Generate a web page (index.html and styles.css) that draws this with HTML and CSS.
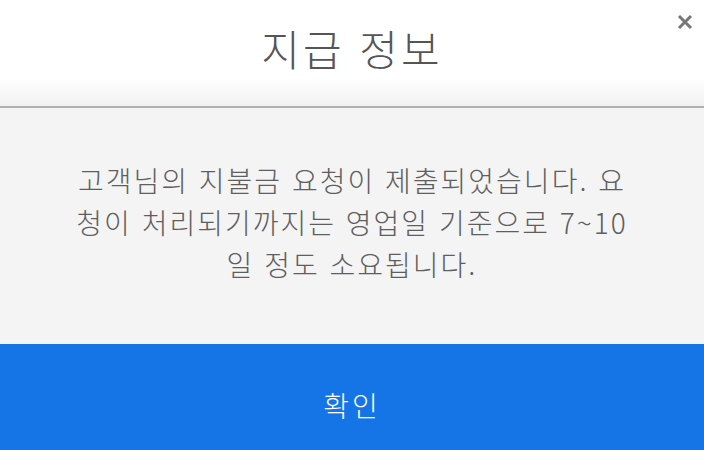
FILE: index.html
```html
<!DOCTYPE html>
<html lang="ko">

<head>
    <meta charset="UTF-8">
    <meta name="viewport" content="width=device-width, initial-scale=1.0">
    <title>지급 정보</title>
    <link rel="stylesheet" href="styles.css">
</head>

<body>
    <div id="dialog">
        <div class="head">
            <h1 class="title">지급 정보</h1>
            <a href="javascript:;" class="close">
                <svg width="16" height="16" viewBox="0 0 16 16">
                    <path d="M2 2 L14 14 M14 2 L2 14" stroke="#777" stroke-width="3" />
                </svg>
            </a>
        </div>
        <div class="body">
            <p class="msg">고객님의 지불금 요청이 제출되었습니다. 요청이 처리되기까지는 영업일 기준으로 7~10일 정도 소요됩니다.</p>
        </div>
        <button class="ok">확인</button>
    </div>
</body>

</html>
```

FILE: styles.css
```css
html,
body {
    margin: 0;
    padding: 0;
    overflow: hidden;
}

#dialog {
    width: 704px;
    height: 450px;
    display: flex;
    flex-direction: column;
    font-family: "Noto Sans CJK KR", "Noto Sans", sans-serif;
    font-weight: 300;
}

.head {
    position: relative;
    height: 106px;
    background: linear-gradient(to bottom, #fff 0, #fff 78px, #f1f1f1 106px);
    border-bottom: 2px solid #b0b0b0;
    display: flex;
    justify-content: center;
}

.title {
    margin: 0;
    padding-top: 20px;
    font-size: 42px;
    font-weight: 300;
    letter-spacing: 3px;
    line-height: 56px;
    color: #555;
}

.close {
    position: absolute;
    top: 14px;
    right: 11px;
    line-height: 0;
}

.body {
    height: 236px;
    padding-bottom: 8px;
    box-sizing: border-box;
    background-color: #f4f4f4;
    display: flex;
    align-items: center;
    justify-content: center;
}

.msg {
    margin: 0;
    width: 566px;
    font-size: 28px;
    letter-spacing: 2px;
    line-height: 42px;
    color: #5e5e5e;
    text-align: center;
}

.ok {
    height: 106px;
    border: none;
    padding: 16px 0 0;
    background-color: #1675e6;
    color: #fff;
    font-family: inherit;
    font-weight: 300;
    font-size: 28px;
    letter-spacing: 3px;
    cursor: pointer;
}
```
